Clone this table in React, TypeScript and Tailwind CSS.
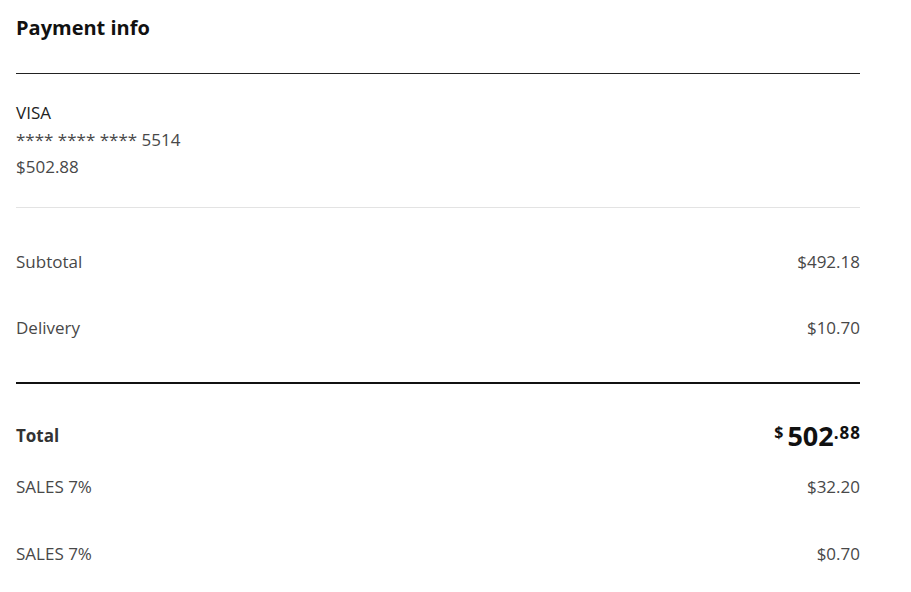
import React from "react";

const font = { fontFamily: '"Open Sans", "Noto Sans", Arial, sans-serif' };

function Row({ label, value }: { label: string; value: string }) {
  return (
    <div className="flex justify-between text-[17px] leading-[24px] text-[#484848]">
      <span>{label}</span>
      <span>{value}</span>
    </div>
  );
}

export default function App() {
  return (
    <div className="w-[911px] h-[592px] bg-white overflow-hidden" style={font}>
      <div className="ml-4 w-[844px]">
        <h2 className="pt-[14px] text-[20px] leading-[27px] font-bold text-[#111]">Payment info</h2>
        <div className="mt-[32px] border-b border-[#222]" />
        <div className="pt-[25px] pb-[27px] border-b border-[#e3e3e3] text-[17px] leading-[27px] text-[#484848]">
          <div className="text-[#222]">VISA</div>
          <div>**** **** **** 5514</div>
          <div>$502.88</div>
        </div>
        <div className="py-[42px] flex flex-col gap-[42px] border-b-2 border-[#111]">
          <Row label="Subtotal" value="$492.18" />
          <Row label="Delivery" value="$10.70" />
        </div>
        <div className="pt-[37px] flex justify-between items-center h-[67px]">
          <span className="text-[17px] font-bold text-[#333]">Total</span>
          <span className="flex items-start font-bold text-[#111]">
            <span className="text-[16px] leading-[18px] mt-[2px] mr-[4px]">$</span>
            <span className="text-[27px] leading-[30px]">502</span>
            <span className="text-[17px] leading-[18px] mt-[3px] tracking-[1px] -mr-[1px]">.88</span>
          </span>
        </div>
        <div className="mt-[24px]">
          <Row label="SALES 7%" value="$32.20" />
        </div>
        <div className="mt-[43px]">
          <Row label="SALES 7%" value="$0.70" />
        </div>
      </div>
    </div>
  );
}
